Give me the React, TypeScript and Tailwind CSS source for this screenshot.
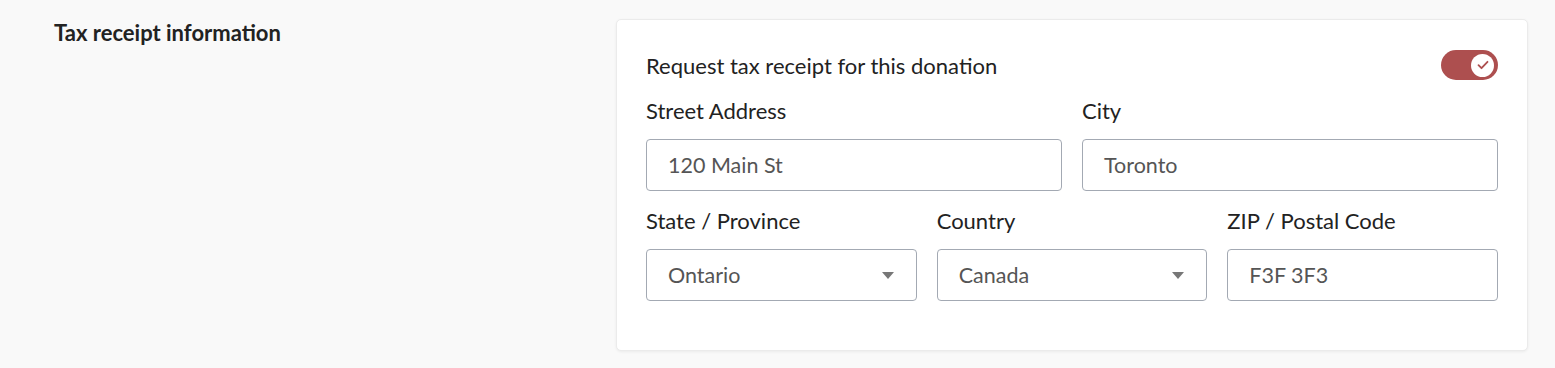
import React, { useState } from "react";

const Field: React.FC<{ label: string; value: string; select?: boolean }> = ({
  label,
  value,
  select,
}) => (
  <div className="flex flex-col">
    <label className="text-[22px] leading-[30px] text-[#222] mb-[13px]">
      {label}
    </label>
    <div className="h-[52px] border border-[#a3a9b3] rounded-[4px] bg-white flex items-center pl-[21px] pr-[22px] text-[21.5px] text-[#555]">
      <span className="flex-1">{value}</span>
      {select && (
        <svg width="12" height="7" viewBox="0 0 12 7" className="shrink-0">
          <path d="M0 0h12L6 7z" fill="#777" />
        </svg>
      )}
    </div>
  </div>
);

const App: React.FC = () => {
  const [on, setOn] = useState(true);

  return (
    <div className="min-h-[368px] bg-[#f9f9f9] font-['Lato',sans-serif] flex pt-[19px]">
      <div className="w-[616px] pl-[54px]">
        <h2 className="text-[22px] font-bold text-[#222] leading-[28px]">
          Tax receipt information
        </h2>
      </div>
      <div className="w-[912px] h-[332px] bg-white rounded-[5px] border border-[#ebebeb] shadow-[0_1px_3px_rgba(0,0,0,0.06)] pt-[30px] px-[29px] pb-[49px]">
        <div className="h-[30px] flex items-center justify-between">
          <span className="text-[22px] text-[#222]">
            Request tax receipt for this donation
          </span>
          <button
            onClick={() => setOn(!on)}
            className={`w-[57px] h-[30px] rounded-full flex items-center px-[4px] ${
              on ? "bg-[#ad4f4f] justify-end" : "bg-[#ccc] justify-start"
            }`}
          >
            <span className="w-[23px] h-[23px] rounded-full bg-white flex items-center justify-center">
              {on && (
                <svg width="12" height="10" viewBox="0 0 12 10">
                  <path
                    d="M1.5 5.2l3 3L10.5 1.8"
                    fill="none"
                    stroke="#ad4f4f"
                    strokeWidth="1.8"
                    strokeLinecap="round"
                    strokeLinejoin="round"
                  />
                </svg>
              )}
            </span>
          </button>
        </div>
        <div className="grid grid-cols-2 gap-x-[20px] mt-[16px]">
          <Field label="Street Address" value="120 Main St" />
          <Field label="City" value="Toronto" />
        </div>
        <div className="grid grid-cols-3 gap-x-[20px] mt-[15px]">
          <Field label="State / Province" value="Ontario" select />
          <Field label="Country" value="Canada" select />
          <Field label="ZIP / Postal Code" value="F3F 3F3" />
        </div>
      </div>
    </div>
  );
};

export default App;
